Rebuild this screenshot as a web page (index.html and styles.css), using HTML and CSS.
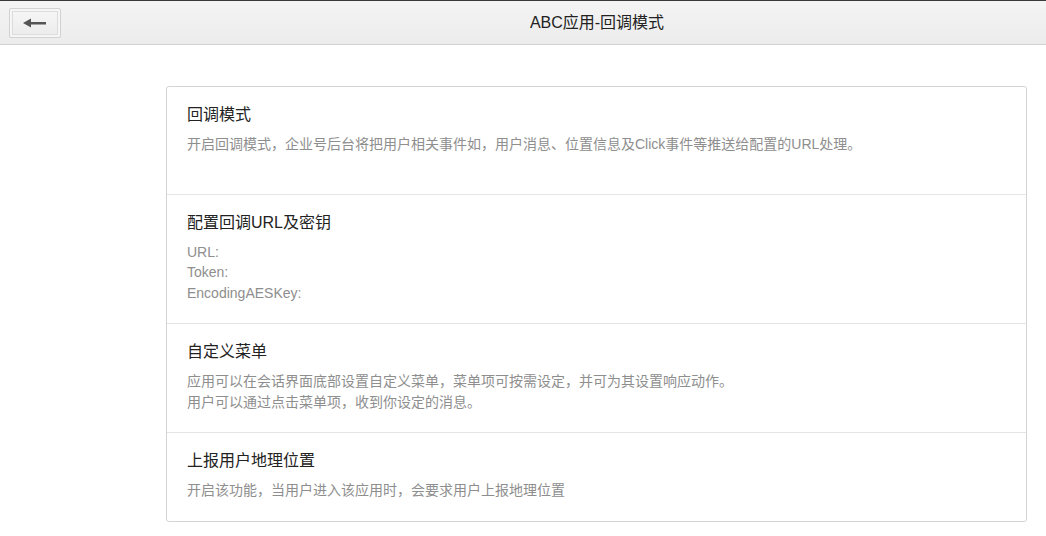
FILE: index.html
```html
<!DOCTYPE html>
<html lang="zh-CN">
<head>
<meta charset="utf-8">
<title>ABC应用-回调模式</title>
<link rel="stylesheet" href="styles.css">
</head>
<body>
<header class="topbar">
  <button class="back-btn" type="button" aria-label="返回">
    <svg width="24" height="10" viewBox="0 0 24 10"><path d="M0 5 L8 0.5 L8 4 L23 4 L23 6.5 L8 6.5 L8 9.5 Z" fill="#555"/></svg>
  </button>
  <h1 class="title">ABC应用-回调模式</h1>
</header>
<main class="content">
  <div class="card">
    <section class="item item-first">
      <h2 class="item-title">回调模式</h2>
      <p class="item-desc">开启回调模式，企业号后台将把用户相关事件如，用户消息、位置信息及Click事件等推送给配置的URL处理。</p>
    </section>
    <section class="item">
      <h2 class="item-title">配置回调URL及密钥</h2>
      <p class="item-desc">URL:</p>
      <p class="item-desc">Token:</p>
      <p class="item-desc">EncodingAESKey:</p>
    </section>
    <section class="item">
      <h2 class="item-title">自定义菜单</h2>
      <p class="item-desc">应用可以在会话界面底部设置自定义菜单，菜单项可按需设定，并可为其设置响应动作。</p>
      <p class="item-desc">用户可以通过点击菜单项，收到你设定的消息。</p>
    </section>
    <section class="item">
      <h2 class="item-title">上报用户地理位置</h2>
      <p class="item-desc">开启该功能，当用户进入该应用时，会要求用户上报地理位置</p>
    </section>
  </div>
</main>
</body>
</html>
```
FILE: styles.css
```css
html, body {
  margin: 0;
  padding: 0;
  background: #ffffff;
  font-family: "Liberation Sans", "Noto Sans CJK SC", sans-serif;
}

.topbar {
  display: flex;
  align-items: center;
  height: 45px;
  box-sizing: border-box;
  border-top: 1px solid #3a3a3a;
  border-bottom: 1px solid #d2d2d2;
  background: linear-gradient(#f4f4f4, #ececec);
}

.back-btn {
  margin-left: 9px;
  width: 52px;
  height: 30px;
  padding: 0;
  display: flex;
  align-items: center;
  justify-content: center;
  border: 1px solid #d2d2d2;
  border-radius: 2px;
  background: linear-gradient(#f7f7f7, #ebebeb);
  box-shadow: inset 0 0 0 2px #f6f6f6, inset 0 0 0 3px #dcdcdc;
}

.title {
  flex: 1;
  margin: 0 0 0 87px;
  text-align: center;
  font-size: 16px;
  font-weight: normal;
  color: #222;
  line-height: 20px;
}

.content {
  padding: 41px 19px 0 166px;
}

.card {
  border: 1px solid #d4d4d4;
  border-radius: 3px;
  background: #fff;
}

.item {
  padding: 17px 20px 20px;
  border-top: 1px solid #e4e4e4;
}

.item-first {
  border-top: none;
  padding-bottom: 39px;
}

.item-title {
  margin: 0 0 8px;
  font-size: 16px;
  font-weight: normal;
  line-height: 22px;
  color: #222;
}

.item-desc {
  margin: 0;
  font-size: 14px;
  line-height: 20.5px;
  color: #8e8e8e;
}
```
